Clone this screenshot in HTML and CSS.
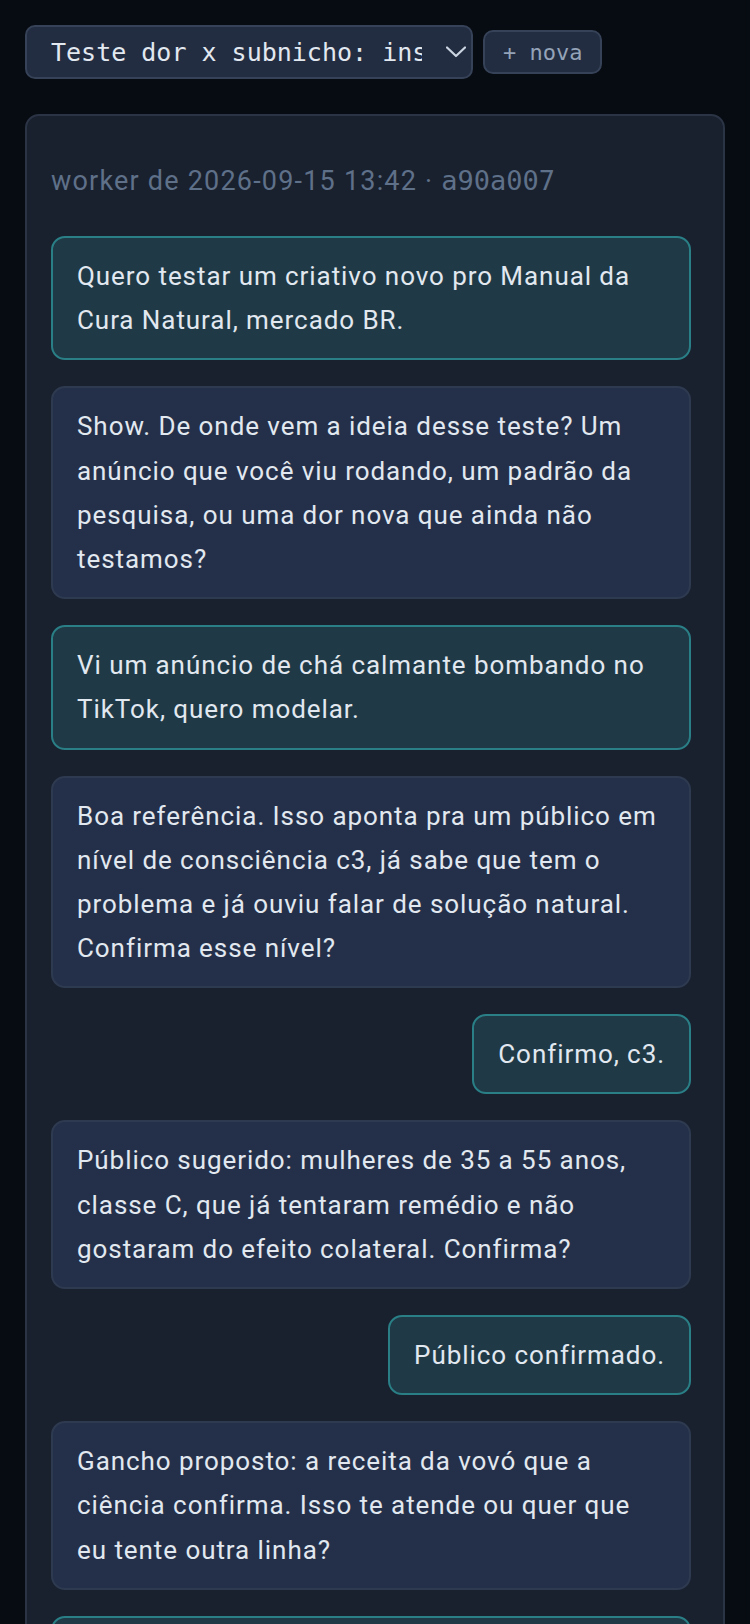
FILE: index.html
```html
<!DOCTYPE html>
<html lang="pt-BR">
<head>
  <meta charset="UTF-8" />
  <meta name="viewport" content="width=device-width, initial-scale=1.0"/>
  <title>Teste dor x subnicho</title>
  <link rel="stylesheet" href="styles.css">
</head>
<body>
  <div class="toolbar">
    <div class="session-select">
      <span class="session-name">Teste dor x subnicho: insônia</span>
      <svg class="chevron" width="20" height="12" viewBox="0 0 20 12">
        <polyline points="1,1.5 10,10 19,1.5" fill="none" stroke="#cbd5e1" stroke-width="2.2" stroke-linecap="round" stroke-linejoin="round"/>
      </svg>
    </div>
    <button class="btn-new">+ nova</button>
  </div>

  <div class="chat-card">
    <div class="meta">worker de 2026-09-15 13:42 · <span class="hash">a90a007</span></div>

    <div class="messages">
      <div class="msg user">Quero testar um criativo novo pro Manual da Cura Natural, mercado BR.</div>
      <div class="msg bot">Show. De onde vem a ideia desse teste? Um anúncio que você viu rodando, um padrão da pesquisa, ou uma dor nova que ainda não testamos?</div>
      <div class="msg user">Vi um anúncio de chá calmante bombando no TikTok, quero modelar.</div>
      <div class="msg bot">Boa referência. Isso aponta pra um público em nível de consciência c3, já sabe que tem o problema e já ouviu falar de solução natural. Confirma esse nível?</div>
      <div class="msg user">Confirmo, c3.</div>
      <div class="msg bot">Público sugerido: mulheres de 35 a 55 anos, classe C, que já tentaram remédio e não gostaram do efeito colateral. Confirma?</div>
      <div class="msg user">Público confirmado.</div>
      <div class="msg bot">Gancho proposto: a receita da vovó que a ciência confirma. Isso te atende ou quer que eu tente outra linha?</div>
      <div class="msg user">Pode seguir com esse gancho, gostei bastante da linha.</div>
    </div>
  </div>
</body>
</html>
```

FILE: styles.css
```css
body {
  margin: 0;
  padding: 25px;
  background-color: #070b12;
  font-family: Roboto, "Noto Sans", sans-serif;
  color: #e2e8f0;
  overflow: hidden;
}

.toolbar {
  display: flex;
  align-items: center;
  gap: 10px;
}

.session-select {
  box-sizing: border-box;
  width: 448px;
  height: 54px;
  display: flex;
  align-items: center;
  gap: 24px;
  padding: 0 5px 0 24px;
  background-color: #222d42;
  border: 2px solid #364257;
  border-radius: 10px;
}

.session-name {
  flex: 1;
  overflow: hidden;
  white-space: nowrap;
  font-family: "DejaVu Sans Mono", "Liberation Mono", monospace;
  font-size: 25px;
  color: #e2e8f0;
}

.chevron {
  flex-shrink: 0;
}

.btn-new {
  box-sizing: border-box;
  height: 44px;
  padding: 0 18px;
  background-color: #222d42;
  border: 2px solid #364257;
  border-radius: 10px;
  font-family: "DejaVu Sans Mono", "Liberation Mono", monospace;
  font-size: 22px;
  color: #94a3b8;
}

.chat-card {
  margin-top: 35px;
  padding: 24px 32px 40px 24px;
  background-color: #19212f;
  border: 2px solid #2a3444;
  border-radius: 14px;
}

.meta {
  margin: 19px 0 33px;
  font-size: 27px;
  line-height: 44px;
  letter-spacing: 1.2px;
  color: #5f7089;
}

.hash {
  font-family: "DejaVu Sans Mono", "Liberation Mono", monospace;
  font-size: 27px;
  letter-spacing: 0;
}

.messages {
  display: flex;
  flex-direction: column;
  gap: 26px;
}

.msg {
  padding: 16px 24px;
  border: 2px solid;
  border-radius: 14px;
  font-size: 26px;
  line-height: 1.7;
  letter-spacing: 0.036em;
}

.msg.bot {
  background-color: #243049;
  border-color: #2e3a50;
}

.msg.user {
  align-self: flex-end;
  background-color: #1f3a46;
  border-color: #2a7f86;
}
```
